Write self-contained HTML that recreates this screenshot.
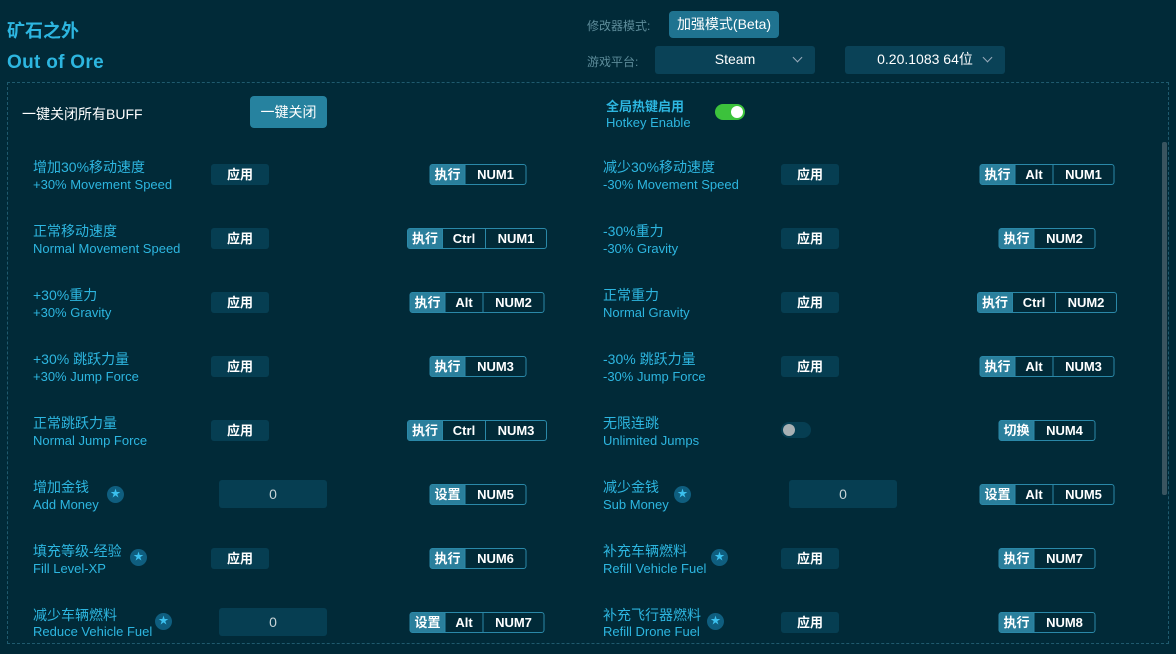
<!DOCTYPE html>
<html><head><meta charset="utf-8"><style>
*{margin:0;padding:0;box-sizing:border-box}
body{width:1176px;height:654px;background:#012a38;font-family:"Liberation Sans","Noto Sans CJK SC",sans-serif;position:relative;overflow:hidden;color:#fff}
.a{position:absolute}
.t1{left:7px;top:17px;font-size:18px;font-weight:bold;color:#2db6e0}
.t2{left:7px;top:52px;font-size:19px;font-weight:bold;color:#2db6e0;letter-spacing:0.3px}
.box{left:7px;top:82px;width:1162px;height:562px;border:1px dashed #1f5a6e}
.lab{font-size:12px;color:#5d8c9a}
.btn{background:#1f7390;border-radius:4px;color:#fff;font-size:14px;text-align:center}
.dd{background:#0a4257;border-radius:3px;color:#fff;font-size:14px;text-align:center;line-height:27px}
.dd i{position:absolute;right:14px;top:8px;width:7px;height:7px;border-right:1.5px solid #9ab;border-bottom:1.5px solid #9ab;transform:rotate(45deg)}
.cn{font-size:14px;color:#2db6e0;line-height:18px;white-space:nowrap}
.en{font-size:13px;color:#2db6e0;line-height:16px;white-space:nowrap}
.ap{width:58px;height:21px;background:#063e52;border-radius:3px;font-size:13px;text-align:center;line-height:21px;color:#fff;font-weight:bold}
.in{width:108px;height:28px;background:#063e52;border-radius:3px;font-size:14px;text-align:center;line-height:28px;color:#c8d4d8}
.hk{height:21px;display:flex;border:1px solid #2a88a8;border-radius:3px;font-size:13px;line-height:19px;transform:translateX(-50%);font-weight:bold}
.hk span{text-align:center;border-left:1px solid #2a88a8;color:#fff}
.hk span:first-child{background:#2a7f9c;border-left:none;width:34px}
.k{width:38px}.c{width:43px}.n{width:61px}
.st{width:17px;height:17px;border-radius:50%;background:#0f5e7f;color:#3bc0ee;font-size:10px;text-align:center;line-height:17px}
</style></head><body>
<div class="a t1">矿石之外</div>
<div class="a t2">Out of Ore</div>
<div class="a lab" style="left:587px;top:17px">修改器模式:</div>
<div class="a btn" style="left:669px;top:11px;width:110px;height:27px;line-height:27px">加强模式(Beta)</div>
<div class="a lab" style="left:587px;top:53px">游戏平台:</div>
<div class="a dd" style="left:655px;top:46px;width:160px;height:28px">Steam<i></i></div>
<div class="a dd" style="left:845px;top:46px;width:160px;height:28px">0.20.1083 64位<i></i></div>
<div class="a box"></div>
<div class="a" style="left:22px;top:104px;font-size:14px;color:#fff">一键关闭所有BUFF</div>
<div class="a btn" style="left:250px;top:96px;width:77px;height:32px;line-height:32px;background:#26829f">一键关闭</div>
<div class="a" style="left:606px;top:96px;font-size:13px;font-weight:bold;color:#2db6e0">全局热键启用</div>
<div class="a en" style="left:606px;top:115px">Hotkey Enable</div>
<div class="a" style="left:715px;top:104px;width:30px;height:16px;border-radius:8px;background:#3cc23c"><div class="a" style="left:16px;top:2px;width:12px;height:12px;border-radius:50%;background:#fff"></div></div>
<div class="a" style="left:1162px;top:142px;width:5px;height:353px;background:#3a5560;border-radius:2px"></div>

<div class="a cn" style="left:33px;top:158px">增加30%移动速度</div><div class="a en" style="left:33px;top:177px">+30% Movement Speed</div>
<div class="a ap" style="left:211px;top:164px">应用</div>
<div class="a hk" style="left:478px;top:164px"><span>执行</span><span class="n">NUM1</span></div>
<div class="a cn" style="left:603px;top:158px">减少30%移动速度</div><div class="a en" style="left:603px;top:177px">-30% Movement Speed</div>
<div class="a ap" style="left:781px;top:164px">应用</div>
<div class="a hk" style="left:1047px;top:164px"><span>执行</span><span class="k">Alt</span><span class="n">NUM1</span></div>

<div class="a cn" style="left:33px;top:222px">正常移动速度</div><div class="a en" style="left:33px;top:241px">Normal Movement Speed</div>
<div class="a ap" style="left:211px;top:228px">应用</div>
<div class="a hk" style="left:477px;top:228px"><span>执行</span><span class="c">Ctrl</span><span class="n">NUM1</span></div>
<div class="a cn" style="left:603px;top:222px">-30%重力</div><div class="a en" style="left:603px;top:241px">-30% Gravity</div>
<div class="a ap" style="left:781px;top:228px">应用</div>
<div class="a hk" style="left:1047px;top:228px"><span>执行</span><span class="n">NUM2</span></div>

<div class="a cn" style="left:33px;top:286px">+30%重力</div><div class="a en" style="left:33px;top:305px">+30% Gravity</div>
<div class="a ap" style="left:211px;top:292px">应用</div>
<div class="a hk" style="left:477px;top:292px"><span>执行</span><span class="k">Alt</span><span class="n">NUM2</span></div>
<div class="a cn" style="left:603px;top:286px">正常重力</div><div class="a en" style="left:603px;top:305px">Normal Gravity</div>
<div class="a ap" style="left:781px;top:292px">应用</div>
<div class="a hk" style="left:1047px;top:292px"><span>执行</span><span class="c">Ctrl</span><span class="n">NUM2</span></div>

<div class="a cn" style="left:33px;top:350px">+30% 跳跃力量</div><div class="a en" style="left:33px;top:369px">+30% Jump Force</div>
<div class="a ap" style="left:211px;top:356px">应用</div>
<div class="a hk" style="left:478px;top:356px"><span>执行</span><span class="n">NUM3</span></div>
<div class="a cn" style="left:603px;top:350px">-30% 跳跃力量</div><div class="a en" style="left:603px;top:369px">-30% Jump Force</div>
<div class="a ap" style="left:781px;top:356px">应用</div>
<div class="a hk" style="left:1047px;top:356px"><span>执行</span><span class="k">Alt</span><span class="n">NUM3</span></div>

<div class="a cn" style="left:33px;top:414px">正常跳跃力量</div><div class="a en" style="left:33px;top:433px">Normal Jump Force</div>
<div class="a ap" style="left:211px;top:420px">应用</div>
<div class="a hk" style="left:477px;top:420px"><span>执行</span><span class="c">Ctrl</span><span class="n">NUM3</span></div>
<div class="a cn" style="left:603px;top:414px">无限连跳</div><div class="a en" style="left:603px;top:433px">Unlimited Jumps</div>
<div class="a" style="left:781px;top:422px;width:30px;height:16px;border-radius:8px;background:#063e52"><div class="a" style="left:2px;top:2px;width:12px;height:12px;border-radius:50%;background:#a8b0b4"></div></div>
<div class="a hk" style="left:1047px;top:420px"><span>切换</span><span class="n">NUM4</span></div>

<div class="a cn" style="left:33px;top:478px">增加金钱</div><div class="a en" style="left:33px;top:497px">Add Money</div>
<div class="a st" style="left:107px;top:486px">★</div>
<div class="a in" style="left:219px;top:480px">0</div>
<div class="a hk" style="left:478px;top:484px"><span>设置</span><span class="n">NUM5</span></div>
<div class="a cn" style="left:603px;top:478px">减少金钱</div><div class="a en" style="left:603px;top:497px">Sub Money</div>
<div class="a st" style="left:674px;top:486px">★</div>
<div class="a in" style="left:789px;top:480px">0</div>
<div class="a hk" style="left:1047px;top:484px"><span>设置</span><span class="k">Alt</span><span class="n">NUM5</span></div>

<div class="a cn" style="left:33px;top:542px">填充等级-经验</div><div class="a en" style="left:33px;top:561px">Fill Level-XP</div>
<div class="a st" style="left:130px;top:549px">★</div>
<div class="a ap" style="left:211px;top:548px">应用</div>
<div class="a hk" style="left:478px;top:548px"><span>执行</span><span class="n">NUM6</span></div>
<div class="a cn" style="left:603px;top:542px">补充车辆燃料</div><div class="a en" style="left:603px;top:561px">Refill Vehicle Fuel</div>
<div class="a st" style="left:711px;top:549px">★</div>
<div class="a ap" style="left:781px;top:548px">应用</div>
<div class="a hk" style="left:1047px;top:548px"><span>执行</span><span class="n">NUM7</span></div>

<div class="a cn" style="left:33px;top:606px">减少车辆燃料</div><div class="a en" style="left:33px;top:624px">Reduce Vehicle Fuel</div>
<div class="a st" style="left:155px;top:613px">★</div>
<div class="a in" style="left:219px;top:608px">0</div>
<div class="a hk" style="left:477px;top:612px"><span>设置</span><span class="k">Alt</span><span class="n">NUM7</span></div>
<div class="a cn" style="left:603px;top:606px">补充飞行器燃料</div><div class="a en" style="left:603px;top:624px">Refill Drone Fuel</div>
<div class="a st" style="left:707px;top:613px">★</div>
<div class="a ap" style="left:781px;top:612px">应用</div>
<div class="a hk" style="left:1047px;top:612px"><span>执行</span><span class="n">NUM8</span></div>
</body></html>
